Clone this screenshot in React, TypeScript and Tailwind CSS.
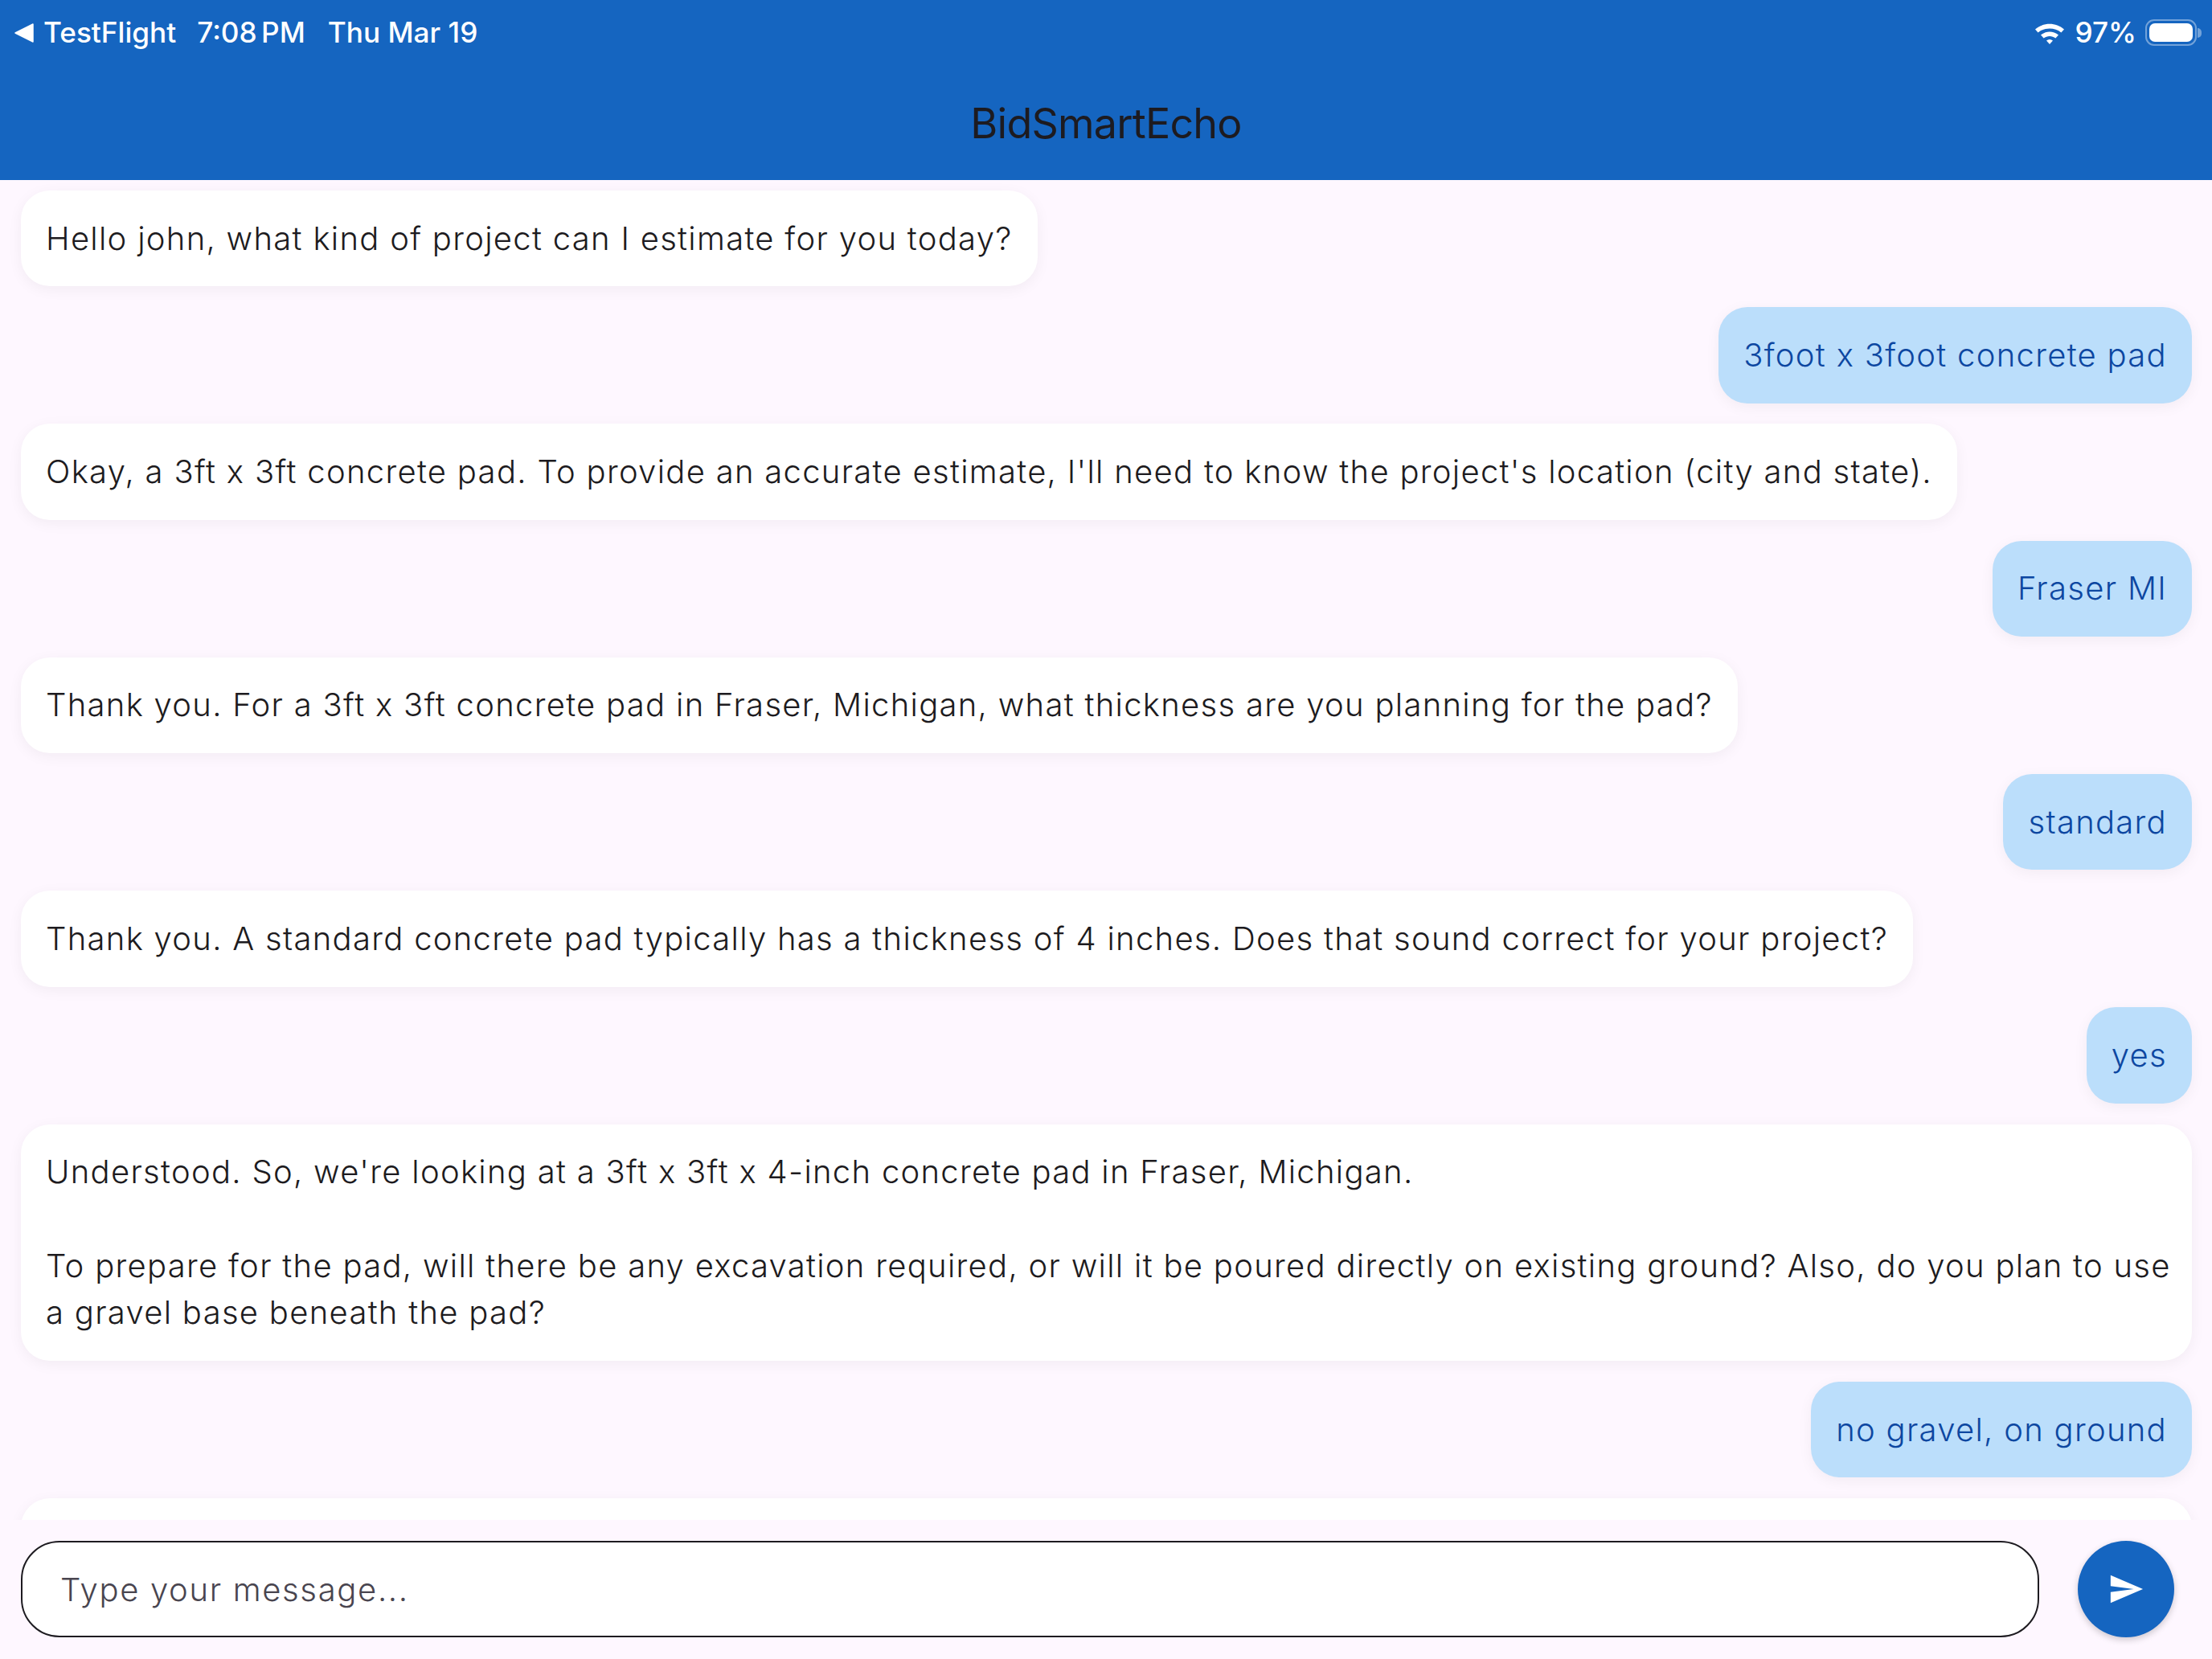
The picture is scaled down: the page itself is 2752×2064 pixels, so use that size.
import { Fragment } from "react";

type Message = { from: "bot" | "user"; text: string };

const messages: Message[] = [
  { from: "bot", text: "Hello john, what kind of project can I estimate for you today?" },
  { from: "user", text: "3foot x 3foot concrete pad" },
  { from: "bot", text: "Okay, a 3ft x 3ft concrete pad. To provide an accurate estimate, I'll need to know the project's location (city and state)." },
  { from: "user", text: "Fraser MI" },
  { from: "bot", text: "Thank you. For a 3ft x 3ft concrete pad in Fraser, Michigan, what thickness are you planning for the pad?" },
  { from: "user", text: "standard" },
  { from: "bot", text: "Thank you. A standard concrete pad typically has a thickness of 4 inches. Does that sound correct for your project?" },
  { from: "user", text: "yes" },
  { from: "bot", text: "Understood. So, we're looking at a 3ft x 3ft x 4-inch concrete pad in Fraser, Michigan.\n\nTo prepare for the pad, will there be any excavation required, or will it be poured directly on existing ground? Also, do you plan to use\na gravel base beneath the pad?" },
  { from: "user", text: "no gravel, on ground" },
];

function StatusBar() {
  return (
    <div className="flex h-[82px] items-center justify-between pl-[18px] pr-[13px] text-[35.2px] font-medium leading-none text-white">
      <div className="flex items-center">
        <svg width="24" height="24" viewBox="0 0 24 24" className="mr-[12px]">
          <path d="M1 12 23 1v22z" fill="#fff" stroke="#fff" strokeWidth="1.5" strokeLinejoin="round" />
        </svg>
        <span className="mr-[26px]">TestFlight</span>
        <span className="mr-[28px] [word-spacing:-4px]">7:08 PM</span>
        <span>Thu Mar 19</span>
      </div>
      <div className="flex items-center">
        <svg width="38" height="28" viewBox="0 0 38 28" className="mr-[12px]">
          <path d="M1 9.5C11 .5 27 .5 37 9.5l-3.6 4C25.5 6.800 12.500 6.800 4.600 13.500z" fill="#fff" />
          <path d="M8 16.500c6.500-5.500 15.500-5.500 22 0l-3.600 4c-4.500-3.500-10.300-3.500-14.800 0z" fill="#fff" />
          <path d="M15 23.500c2.500-2 5.500-2 8 0l-4 4.500z" fill="#fff" />
        </svg>
        <span className="mr-[11px]">97%</span>
        <div className="flex items-center">
          <div className="h-[33px] w-[64px] rounded-[11px] border-[2px] border-white/40 p-[3px]">
            <div className="h-full w-full rounded-[7px] bg-white" />
          </div>
          <div className="ml-[1px] h-[12px] w-[5px] rounded-r-full bg-white/40" />
        </div>
      </div>
    </div>
  );
}

function Bubble({ from, text }: Message) {
  const isUser = from === "user";
  // multi-line replies fill the whole row
  const isWide = text.includes("\n");
  return (
    <div className={isUser ? "flex justify-end" : "flex justify-start"}>
      <div
        className={
          isUser
            ? "whitespace-nowrap rounded-[36px] bg-[#BBDEFB] px-[31px] py-[30.5px] text-[#0D47A1] shadow-[0_4px_18px_rgba(0,0,0,0.05)]"
            : isWide
              ? "w-full whitespace-nowrap rounded-[36px] bg-white px-[31px] py-[30.5px] text-[#1D1B20] shadow-[0_4px_18px_rgba(0,0,0,0.05)]"
              : "whitespace-nowrap rounded-[36px] bg-white px-[31px] py-[30.5px] text-[#1D1B20] shadow-[0_4px_18px_rgba(0,0,0,0.05)]"
        }
      >
        {text.split("\n").map((line, i) => (
          <Fragment key={i}>
            {i > 0 && <br />}
            {line}
          </Fragment>
        ))}
      </div>
    </div>
  );
}

export default function App() {
  return (
    <div className="flex h-[2064px] w-[2752px] flex-col overflow-hidden bg-[#FEF7FF] font-['Inter',sans-serif]">
      <header className="h-[224px] shrink-0 bg-[#1565C0]">
        <StatusBar />
        <h1 className="mt-[24px] text-center text-[52px] font-normal leading-[96px] tracking-[-0.8px] text-[#1D1B20]">
          BidSmartEcho
        </h1>
      </header>

      <main className="flex min-h-0 flex-1 flex-col gap-[25.8px] overflow-hidden pl-[26px] pr-[25px] pt-[13px] text-[40px] font-[350] leading-[58.4px] tracking-[1.29px]">
        {messages.map((m, i) => (
          <Bubble key={i} {...m} />
        ))}
        <div className="h-[120px] w-full shrink-0 rounded-[36px] bg-white shadow-[0_4px_18px_rgba(0,0,0,0.05)]" />
      </main>

      <footer className="flex h-[173px] shrink-0 items-start pl-[26px] pr-[47px] pt-[26px]">
        <div className="flex h-[120px] flex-1 items-center rounded-[48px] border-[2px] border-[#1D1B20] bg-white pl-[47px] pt-[2px] text-[40px] font-[350] leading-[58px] tracking-[1.66px] text-[#49454F]">
          <span>Type your message...</span>
        </div>
        <button className="ml-[48px] flex h-[120px] w-[120px] items-center justify-center rounded-full bg-[#1565C0] shadow-[0_3px_8px_rgba(0,0,0,0.2)]">
          <svg width="46" height="46" viewBox="0 0 24 24">
            <path d="M2.010 21 23 12 2.010 3 2 10l15 2-15 2z" fill="#fff" />
          </svg>
        </button>
      </footer>
    </div>
  );
}
